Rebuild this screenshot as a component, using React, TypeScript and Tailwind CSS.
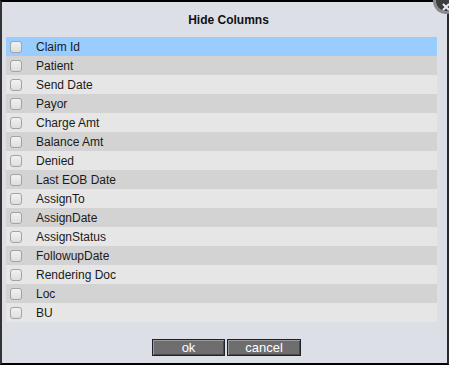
import React from "react";

const cols = [
  "Claim Id",
  "Patient",
  "Send Date",
  "Payor",
  "Charge Amt",
  "Balance Amt",
  "Denied",
  "Last EOB Date",
  "AssignTo",
  "AssignDate",
  "AssignStatus",
  "FollowupDate",
  "Rendering Doc",
  "Loc",
  "BU",
];

function Row({ label, i }: { label: string; i: number }) {
  const bg = i === 0 ? "bg-[#99ccff]" : i % 2 === 1 ? "bg-[#d3d3d3]" : "bg-[#e6e6e6]";
  return (
    <div className={`flex h-[19px] items-center ${bg}`}>
      <div className="ml-[4px] h-[12px] w-[12px] rounded-[3px] border border-[#a3a3a3] bg-gradient-to-b from-[#f2f2f2] to-[#dedede]" />
      <span className="ml-[14px] text-[12px] leading-none text-[#1a1a1a]">{label}</span>
    </div>
  );
}

export default function App() {
  return (
    <div className="relative h-[365px] w-[449px] overflow-hidden">
      <div
        className="h-[365px] w-[449px] border-t-2 border-b-2 border-l-2 border-r-2 border-t-black border-b-black border-l-[#333] border-r-[#2a2a2a] bg-[#dcdfe6]"
        style={{ fontFamily: '"Liberation Sans", Arial, sans-serif' }}
      >
        <div className="flex h-[35px] items-center justify-center pl-[8px] pt-[1px] text-[12px] font-bold text-[#111]">
          Hide Columns
        </div>
        <div className="ml-[4px] mr-[10px] flex flex-col">
          {cols.map((c, i) => (
            <Row key={c} label={c} i={i} />
          ))}
        </div>
        <div className="mt-[17px] flex gap-[2px] pl-[150px]">
          <button className="flex h-[17px] w-[73px] items-center justify-center border border-[#1c2230] bg-[#6e6e6e] text-[13px] leading-none text-white shadow-[inset_1px_1px_0_#9a9a9a,inset_-1px_-1px_0_#4a4a4a]">
            ok
          </button>
          <button className="flex h-[17px] w-[74px] items-center justify-center border border-[#1c2230] bg-[#6e6e6e] text-[13px] leading-none text-white shadow-[inset_1px_1px_0_#9a9a9a,inset_-1px_-1px_0_#4a4a4a]">
            cancel
          </button>
        </div>
      </div>
      <div className="absolute left-[433px] top-[-12px] h-[26px] w-[26px] rounded-full border-[3px] border-[#8a8a8a] bg-[#3e3e3e]">
        <svg width="8" height="8" viewBox="0 0 8 8" className="absolute left-[6px] top-[12px]">
          <path d="M1 1 L7 7 M7 1 L1 7" stroke="#e8eef8" strokeWidth="2" />
        </svg>
      </div>
    </div>
  );
}
